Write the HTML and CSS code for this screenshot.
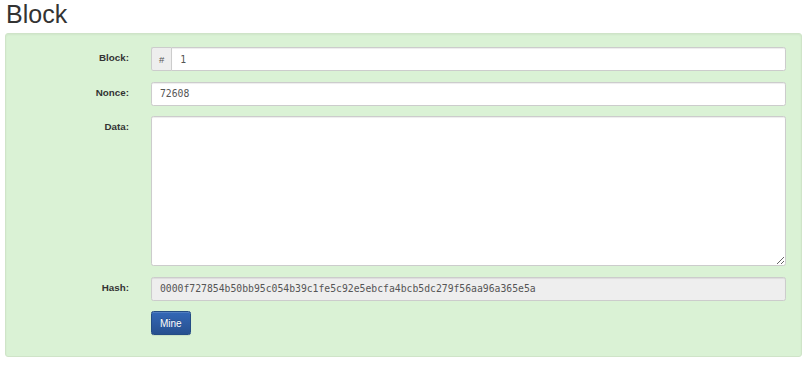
FILE: index.html
```html
<!DOCTYPE html>
<html lang="en">
<head>
    <meta charset="UTF-8">
    <meta name="viewport" content="width=device-width, initial-scale=1.0">
    <title>Block</title>
    <link rel="stylesheet" href="styles.css">
</head>
<body>
    <div id="page">
        <h1 class="title">Block</h1>

        <div class="well">
            <form class="block-form" onsubmit="return false;">
                <label class="control-label" for="block">Block:</label>
                <div class="input-group">
                    <span class="addon">#</span>
                    <input class="field" id="block" type="text" value="1">
                </div>

                <label class="control-label" for="nonce">Nonce:</label>
                <input class="field" id="nonce" type="text" value="72608">

                <label class="control-label" for="data">Data:</label>
                <textarea class="field data" id="data"></textarea>

                <label class="control-label" for="hash">Hash:</label>
                <input class="field hash" id="hash" type="text" value="0000f727854b50bb95c054b39c1fe5c92e5ebcfa4bcb5dc279f56aa96a365e5a" disabled>

                <span></span>
                <div>
                    <button class="btn-primary" type="button">Mine</button>
                </div>
            </form>
        </div>
    </div>
</body>
</html>
```

FILE: styles.css
```css
body {
    margin: 0;
    font-family: 'Liberation Sans', Arial, sans-serif;
    color: #333;
    background-color: #fff;
}

#page {
    margin: 0 7px 0 5px;
}

.title {
    margin: 0 0 5px 1px;
    font-size: 25px;
    font-weight: normal;
    line-height: 28px;
    color: #333;
}

.well {
    background-color: #daf2d5;
    border: 1px solid #cfe4c8;
    border-radius: 3px;
    box-shadow: inset 0 1px 2px rgba(0, 0, 0, 0.05);
    padding: 13px 15px 21px 15px;
    min-height: 20px;
}

.block-form {
    display: grid;
    grid-template-columns: 108px 1fr;
    column-gap: 22px;
    row-gap: 10.6px;
    align-items: start;
}

.control-label {
    padding-top: 5px;
    text-align: right;
    font-size: 9.8px;
    line-height: 11px;
    font-weight: bold;
    color: #333;
}

.input-group {
    display: flex;
}

.addon {
    display: flex;
    align-items: center;
    justify-content: center;
    width: 21px;
    height: 24px;
    box-sizing: border-box;
    background-color: #eee;
    border: 1px solid #ccc;
    border-right: none;
    border-radius: 2.4px 0 0 2.4px;
    font-size: 9.6px;
    color: #555;
}

.field {
    display: block;
    box-sizing: border-box;
    width: 100%;
    height: 24px;
    margin: 0;
    padding: 4px 8px;
    font-family: 'DejaVu Sans Mono', monospace;
    font-size: 9.75px;
    color: #555;
    background-color: #fff;
    border: 1px solid #ccc;
    border-radius: 2.4px;
    box-shadow: inset 0 1px 1px rgba(0, 0, 0, 0.075);
    outline: none;
}

.input-group .field {
    border-radius: 0 2.4px 2.4px 0;
}

.data {
    height: 150px;
    resize: vertical;
}

.hash {
    background-color: #eee;
    opacity: 1;
}

.btn-primary {
    height: 24px;
    padding: 0 8px;
    font-family: 'Liberation Sans', Arial, sans-serif;
    font-size: 10px;
    color: #fff;
    background-image: linear-gradient(to bottom, #3368b7 0, #27508f 100%);
    border: 1px solid #244d85;
    border-radius: 2.4px;
    box-shadow: inset 0 1px 0 rgba(255, 255, 255, 0.15), 0 1px 1px rgba(0, 0, 0, 0.075);
    text-shadow: 0 -1px 0 rgba(0, 0, 0, 0.2);
    cursor: pointer;
}
```
